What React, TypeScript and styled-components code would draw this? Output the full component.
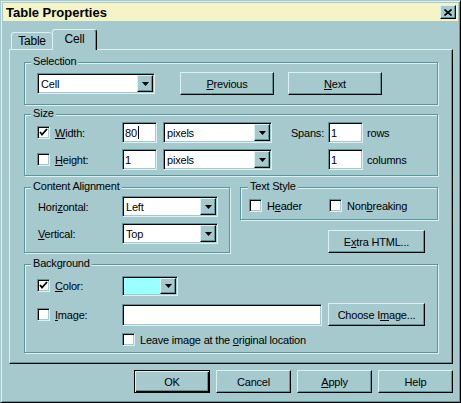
import styled, { createGlobalStyle, css } from 'styled-components';

const FACE = '#a5c9cd';
const LIGHT = '#dcf2f2';
const SHADOW = '#5a979d';
const BLACK = '#000000';
const TITLE = '#f4f4c6';

const GlobalStyle = createGlobalStyle`
  html, body { margin: 0; padding: 0; background: ${FACE}; }
  body {
    font-family: "Liberation Sans", Arial, sans-serif;
    font-size: 11px;
    letter-spacing: -0.2px;
    color: #000;
  }
  * { box-sizing: border-box; }
`;

const Window = styled.div`
  width: 461px;
  height: 403px;
  background: ${FACE};
  border: 1px solid;
  border-color: ${FACE} ${BLACK} ${BLACK} ${FACE};
  box-shadow: inset 1px 1px 0 ${LIGHT}, inset -1px -1px 0 ${SHADOW};
  padding: 1px;
  display: flex;
  flex-direction: column;
`;

const TitleBar = styled.div`
  height: 18px;
  margin: 1px 1px 0;
  background: ${TITLE};
  display: flex;
  align-items: center;
  justify-content: space-between;
  padding: 0 2px 0 3px;
`;

const Title = styled.span`
  font-size: 13px;
  font-weight: bold;
  letter-spacing: 0;
`;

const CloseButton = styled.span`
  width: 16px;
  height: 14px;
  background: ${FACE};
  border: 1px solid;
  border-color: ${LIGHT} ${BLACK} ${BLACK} ${LIGHT};
  box-shadow: inset -1px -1px 0 ${SHADOW};
  display: flex;
  align-items: center;
  justify-content: center;
  padding-right: 1px;
`;

const Body = styled.div`
  padding: 0 6px 0 7px;
  display: flex;
  flex-direction: column;
`;

const TabRow = styled.div`
  margin-top: 8px;
  padding-left: 2px;
  display: flex;
  align-items: flex-end;
`;

const Tab = styled.div<{ $active?: boolean; $w: number }>`
  width: ${p => p.$w}px;
  height: 17px;
  background: ${FACE};
  border-top: 1px solid ${LIGHT};
  border-left: 1px solid ${LIGHT};
  border-radius: 3px 3px 0 0;
  display: flex;
  align-items: center;
  justify-content: center;
  font-size: 12px;
  ${p =>
    p.$active &&
    css`
      height: 21px;
      margin-bottom: -1px;
      position: relative;
      z-index: 1;
      border-right: 1px solid ${BLACK};
      box-shadow: inset -1px 0 0 ${SHADOW};
      padding-bottom: 2px;
    `}
`;

const Panel = styled.div`
  height: 315px;
  border: 1px solid;
  border-color: ${LIGHT} ${BLACK} ${BLACK} ${LIGHT};
  box-shadow: inset -1px -1px 0 ${SHADOW};
  padding: 12px 14px 0;
  display: flex;
  flex-direction: column;
`;

const Group = styled.div<{ $h: number; $w?: number; $mt?: number }>`
  position: relative;
  height: ${p => p.$h}px;
  width: ${p => (p.$w ? `${p.$w}px` : '100%')};
  margin-top: ${p => p.$mt ?? 0}px;
  border: 1px solid ${SHADOW};
  box-shadow: inset 1px 1px 0 ${LIGHT}, 1px 1px 0 ${LIGHT};
  flex: none;
`;

const Legend = styled.span<{ $left?: number }>`
  position: absolute;
  top: -8px;
  left: ${p => p.$left ?? 6}px;
  padding: 0 2px;
  line-height: 13px;
  background: ${FACE};
`;

const SelectionContent = styled.div`
  height: 100%;
  padding-left: 12px;
  display: flex;
  align-items: center;
`;

const Rows = styled.div<{ $pt: number; $gap: number; $pl?: number }>`
  padding: ${p => p.$pt}px 0 0 ${p => p.$pl ?? 12}px;
  display: flex;
  flex-direction: column;
  gap: ${p => p.$gap}px;
`;

const Row = styled.div<{ $h?: number }>`
  height: ${p => p.$h ?? 21}px;
  display: flex;
  align-items: center;
`;

const FieldLabel = styled.label<{ $w: number }>`
  width: ${p => p.$w}px;
  flex: none;
  display: flex;
  align-items: center;
  gap: 5px;
  white-space: nowrap;
`;

const SpanLabel = styled.span`
  width: 56px;
  flex: none;
  text-align: right;
  padding-right: 4px;
`;

const Unit = styled.span`
  margin-left: 4px;
`;

const sunken = css`
  border: 1px solid;
  border-color: ${SHADOW} ${LIGHT} ${LIGHT} ${SHADOW};
  box-shadow: inset 1px 1px 0 ${BLACK}, inset -1px -1px 0 ${FACE};
  padding: 1px;
`;

const CheckBox = styled.span`
  ${sunken};
  width: 13px;
  height: 13px;
  flex: none;
  background: #fff;
  display: flex;
  align-items: center;
  justify-content: center;
`;

const TextField = styled.div<{ $w: number; $h?: number; $ml?: number }>`
  ${sunken};
  width: ${p => p.$w}px;
  height: ${p => p.$h ?? 21}px;
  margin-left: ${p => p.$ml ?? 0}px;
  flex: none;
  background: #fff;
  display: flex;
  align-items: center;
  padding-left: 2px;
`;

const Caret = styled.span`
  width: 1px;
  height: 13px;
  margin-left: 1px;
  background: #000;
`;

const Combo = styled.div<{ $w: number; $h?: number; $ml?: number; $bg?: string }>`
  ${sunken};
  width: ${p => p.$w}px;
  height: ${p => p.$h ?? 21}px;
  margin-left: ${p => p.$ml ?? 0}px;
  flex: none;
  background: ${p => p.$bg ?? '#fff'};
  display: flex;
  align-items: stretch;
`;

const ComboText = styled.span`
  flex: 1;
  padding-left: 2px;
  display: flex;
  align-items: center;
`;

const ArrowButton = styled.span`
  width: 16px;
  flex: none;
  background: ${FACE};
  border: 1px solid;
  border-color: ${LIGHT} ${BLACK} ${BLACK} ${LIGHT};
  box-shadow: inset -1px -1px 0 ${SHADOW};
  display: flex;
  align-items: center;
  justify-content: center;
`;

const Button = styled.button<{ $w: number; $ml?: number; $default?: boolean }>`
  width: ${p => p.$w}px;
  height: 23px;
  margin: 0 0 0 ${p => p.$ml ?? 0}px;
  padding: 0;
  flex: none;
  font: inherit;
  letter-spacing: inherit;
  color: #000;
  background: ${FACE};
  border: 1px solid;
  border-color: ${LIGHT} ${BLACK} ${BLACK} ${LIGHT};
  box-shadow: inset -1px -1px 0 ${SHADOW};
  ${p =>
    p.$default &&
    css`
      border-color: ${BLACK};
      box-shadow: inset 1px 1px 0 ${LIGHT}, inset -1px -1px 0 ${BLACK}, inset -2px -2px 0 ${SHADOW};
    `}
`;

const MiddleRow = styled.div`
  margin-top: 11px;
  display: flex;
  gap: 10px;
`;

const RightColumn = styled.div`
  flex: 1;
  display: flex;
  flex-direction: column;
  align-items: flex-end;
`;

const StyleOptions = styled.div`
  padding: 11px 0 0 8px;
  display: flex;
  align-items: center;
`;

const Option = styled.label<{ $w?: number }>`
  width: ${p => (p.$w ? `${p.$w}px` : 'auto')};
  display: flex;
  align-items: center;
  gap: 5px;
`;

const ExtraButtonWrap = styled.div`
  margin: 10px 13px 0 0;
`;

const Footer = styled.div`
  margin-top: 6px;
  display: flex;
  justify-content: flex-end;
  gap: 6px;
`;

const Arrow = () => (
  <svg width="7" height="4" viewBox="0 0 7 4">
    <polygon points="0,0 7,0 3.5,4" fill="#000" />
  </svg>
);

const Check = () => (
  <svg width="9" height="9" viewBox="0 0 9 9">
    <polyline points="1,4 3,6.5 8,1" fill="none" stroke="#000" strokeWidth="1.8" />
  </svg>
);

const Dropdown = ({ value, w, ml, h, bg }: { value?: string; w: number; ml?: number; h?: number; bg?: string }) => (
  <Combo $w={w} $ml={ml} $h={h} $bg={bg}>
    <ComboText>{value}</ComboText>
    <ArrowButton>
      <Arrow />
    </ArrowButton>
  </Combo>
);

const Box = ({ checked }: { checked?: boolean }) => <CheckBox>{checked && <Check />}</CheckBox>;

export default function App() {
  return (
    <>
      <GlobalStyle />
      <Window>
        <TitleBar>
          <Title>Table Properties</Title>
          <CloseButton>
            <svg width="8" height="7" viewBox="0 0 8 7">
              <path d="M0.5 0.5L7.5 6.5M7.5 0.5L0.5 6.5" stroke="#000" strokeWidth="1.6" />
            </svg>
          </CloseButton>
        </TitleBar>
        <Body>
          <TabRow>
            <Tab $w={41}>Table</Tab>
            <Tab $w={45} $active>
              Cell
            </Tab>
          </TabRow>
          <Panel>
            <Group $h={43}>
              <Legend>Selection</Legend>
              <SelectionContent>
                <Dropdown value="Cell" w={118} />
                <Button $w={94} $ml={25}>
                  <u>P</u>revious
                </Button>
                <Button $w={94} $ml={14}>
                  <u>N</u>ext
                </Button>
              </SelectionContent>
            </Group>

            <Group $h={62} $mt={9}>
              <Legend>Size</Legend>
              <Rows $pt={7} $gap={6}>
                <Row>
                  <FieldLabel $w={85}>
                    <Box checked />
                    <span>
                      <u>W</u>idth:
                    </span>
                  </FieldLabel>
                  <TextField $w={35}>
                    80
                    <Caret />
                  </TextField>
                  <Dropdown value="pixels" w={109} ml={6} />
                  <SpanLabel>Spans:</SpanLabel>
                  <TextField $w={35}>1</TextField>
                  <Unit>rows</Unit>
                </Row>
                <Row>
                  <FieldLabel $w={85}>
                    <Box />
                    <span>
                      <u>H</u>eight:
                    </span>
                  </FieldLabel>
                  <TextField $w={35}>1</TextField>
                  <Dropdown value="pixels" w={109} ml={6} />
                  <SpanLabel />
                  <TextField $w={35}>1</TextField>
                  <Unit>columns</Unit>
                </Row>
              </Rows>
            </Group>

            <MiddleRow>
              <Group $h={66} $w={206}>
                <Legend>Content Alignment</Legend>
                <Rows $pt={8} $gap={6} $pl={13}>
                  <Row>
                    <FieldLabel $w={84}>
                      <span>
                        Hori<u>z</u>ontal:
                      </span>
                    </FieldLabel>
                    <Dropdown value="Left" w={96} />
                  </Row>
                  <Row>
                    <FieldLabel $w={84}>
                      <span>
                        <u>V</u>ertical:
                      </span>
                    </FieldLabel>
                    <Dropdown value="Top" w={96} />
                  </Row>
                </Rows>
              </Group>
              <RightColumn>
                <Group $h={33}>
                  <Legend $left={7}>Text Style</Legend>
                  <StyleOptions>
                    <Option $w={80}>
                      <Box />
                      <span>
                        H<u>e</u>ader
                      </span>
                    </Option>
                    <Option>
                      <Box />
                      <span>
                        Non<u>b</u>reaking
                      </span>
                    </Option>
                  </StyleOptions>
                </Group>
                <ExtraButtonWrap>
                  <Button $w={97}>
                    E<u>x</u>tra HTML...
                  </Button>
                </ExtraButtonWrap>
              </RightColumn>
            </MiddleRow>

            <Group $h={89} $mt={11}>
              <Legend>Background</Legend>
              <Rows $pt={10} $gap={7}>
                <Row>
                  <FieldLabel $w={85}>
                    <Box checked />
                    <span>
                      <u>C</u>olor:
                    </span>
                  </FieldLabel>
                  <Dropdown w={56} h={20} bg="#99ffff" />
                </Row>
                <Row $h={23}>
                  <FieldLabel $w={85}>
                    <Box />
                    <span>
                      <u>I</u>mage:
                    </span>
                  </FieldLabel>
                  <TextField $w={200} $h={22} />
                  <Button $w={97} $ml={6}>
                    Choose I<u>m</u>age...
                  </Button>
                </Row>
                <Row $h={13}>
                  <FieldLabel $w={85} />
                  <Option>
                    <Box />
                    <span>
                      Leave image at the <u>o</u>riginal location
                    </span>
                  </Option>
                </Row>
              </Rows>
            </Group>
          </Panel>
          <Footer>
            <Button $w={76} $default>
              OK
            </Button>
            <Button $w={75}>Cancel</Button>
            <Button $w={75}>
              <u>A</u>pply
            </Button>
            <Button $w={75}>Help</Button>
          </Footer>
        </Body>
      </Window>
    </>
  );
}
